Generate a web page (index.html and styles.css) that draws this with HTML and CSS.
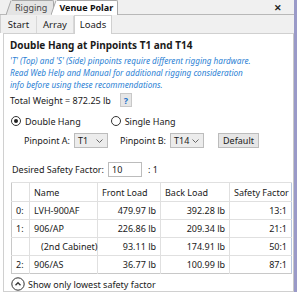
FILE: index.html
```html
<!DOCTYPE html>
<html lang="en">
<head>
    <meta charset="UTF-8">
    <title>Loads</title>
    <link rel="stylesheet" href="styles.css">
</head>
<body>
    <div class="window">
        <div class="doc-tabs">
            <div class="doc-tab">
                <svg class="slant" width="6" height="15" viewBox="0 0 6 15"><polygon points="0,15 5,0.5 6,0.5 6,15" fill="#e4e4e4"/><line x1="0" y1="15" x2="5" y2="0.5" stroke="#a8a8a8"/></svg>
                <span class="doc-label">Rigging</span>
            </div>
            <div class="doc-tab active">
                <svg class="slant" width="6" height="15" viewBox="0 0 6 15"><polygon points="0,15 5,0.5 6,0.5 6,15" fill="#fff"/><line x1="0" y1="15" x2="5" y2="0.5" stroke="#a8a8a8"/></svg>
                <span class="doc-label">Venue Polar</span>
            </div>
            <span class="close">&#x2715;</span>
        </div>
        <div class="sub-tabs">
            <span class="sub-tab">Start</span>
            <span class="sub-tab">Array</span>
            <span class="sub-tab active">Loads</span>
        </div>
        <div class="panel">
            <h1 class="title">Double Hang at Pinpoints T1 and T14</h1>
            <p class="note">'T' (Top) and 'S' (Side) pinpoints require different rigging hardware.
                Read Web Help and Manual for additional rigging consideration
                info before using these recommendations.</p>
            <div class="weight-row">
                <span>Total Weight = 872.25 lb</span>
                <button class="help">?</button>
            </div>
            <div class="radio-row">
                <label class="radio"><span class="dot checked"></span>Double Hang</label>
                <label class="radio"><span class="dot"></span>Single Hang</label>
            </div>
            <div class="pin-row">
                <span>Pinpoint A:</span>
                <span class="select">T1<svg width="7" height="4" viewBox="0 0 7 4"><polyline points="0.5,0.5 3.5,3.5 6.5,0.5" fill="none" stroke="#666"/></svg></span>
                <span class="pin-b">Pinpoint B:</span>
                <span class="select">T14<svg width="7" height="4" viewBox="0 0 7 4"><polyline points="0.5,0.5 3.5,3.5 6.5,0.5" fill="none" stroke="#666"/></svg></span>
                <button class="default">Default</button>
            </div>
            <div class="safety-row">
                <span>Desired Safety Factor:</span>
                <span class="input">10</span>
                <span>: 1</span>
            </div>
            <table class="loads">
                <tr>
                    <th class="idx"></th>
                    <th class="name">Name</th>
                    <th>Front Load</th>
                    <th>Back Load</th>
                    <th>Safety Factor</th>
                </tr>
                <tr>
                    <td class="idx">0:</td>
                    <td class="name">LVH-900AF</td>
                    <td class="num">479.97 lb</td>
                    <td class="num">392.28 lb</td>
                    <td class="num">13:1</td>
                </tr>
                <tr>
                    <td class="idx">1:</td>
                    <td class="name">906/AP</td>
                    <td class="num">226.86 lb</td>
                    <td class="num">209.34 lb</td>
                    <td class="num">21:1</td>
                </tr>
                <tr>
                    <td class="idx"></td>
                    <td class="name sub">(2nd Cabinet)</td>
                    <td class="num">93.11 lb</td>
                    <td class="num">174.91 lb</td>
                    <td class="num">50:1</td>
                </tr>
                <tr>
                    <td class="idx">2:</td>
                    <td class="name">906/AS</td>
                    <td class="num">36.77 lb</td>
                    <td class="num">100.99 lb</td>
                    <td class="num">87:1</td>
                </tr>
            </table>
            <div class="toggle">
                <svg width="14" height="14" viewBox="0 0 14 14"><circle cx="7" cy="7" r="6.2" fill="none" stroke="#333"/><polyline points="4.5,8.2 7,5.7 9.5,8.2" fill="none" stroke="#333" stroke-width="1.3"/></svg>
                <span>Show only lowest safety factor</span>
            </div>
        </div>
    </div>
</body>
</html>
```

FILE: styles.css
```css
body {
    margin: 0;
    font-family: "Noto Sans", "Open Sans", sans-serif;
    font-size: 9px;
    color: #1a1a1a;
    background: #fff;
}

.window {
    width: 294px;
    height: 292px;
    border-right: 3px solid #9a9ac8;
    display: flex;
    flex-direction: column;
}

.doc-tabs {
    height: 17px;
    box-sizing: border-box;
    background: #f0f0f0;
    border-bottom: 1px solid #b8b8b8;
    display: flex;
    align-items: flex-end;
    padding-left: 6px;
}

.doc-tab {
    display: flex;
    height: 15px;
    margin-bottom: -1px;
}

.doc-tab + .doc-tab {
    margin-left: -3px;
}

.slant {
    display: block;
}

.doc-label {
    border-top: 1px solid #a8a8a8;
    border-right: 1px solid #a8a8a8;
    border-radius: 0 2px 0 0;
    background: #e4e4e4;
    padding: 0 6px 0 3px;
    line-height: 14px;
    color: #444;
}

.doc-tab.active .doc-label {
    background: #fff;
    color: #111;
    font-weight: bold;
    padding: 0 4px 0 2px;
}

.close {
    margin-left: auto;
    margin-right: 12px;
    align-self: center;
    font-size: 9px;
    font-weight: bold;
    color: #222;
}

.sub-tabs {
    height: 18px;
    background: #f0f0f0;
    display: flex;
    align-items: flex-end;
    padding-left: 0;
    border-left: 1px solid #d0d0d0;
}

.sub-tab {
    height: 17px;
    line-height: 17px;
    width: 36px;
    text-align: center;
    box-sizing: border-box;
    border-right: 1px solid #d8d8d8;
    color: #222;
    font-size: 9.5px;
}

.sub-tab:nth-child(2) {
    width: 37px;
}

.sub-tab.active {
    height: 19px;
    line-height: 18px;
    width: 38px;
    background: #fff;
    border: 1px solid #d0d0d0;
    border-bottom: none;
    margin-bottom: -1px;
    position: relative;
}

.panel {
    flex: 1;
    margin-left: 3px;
    border: 1px solid #d0d0d0;
    border-right-color: #c8c8c8;
    padding: 0 0 0 5px;
}

.title {
    margin: 5px 0 3px 1px;
    font-size: 10px;
    font-weight: bold;
    line-height: 13px;
}

.note {
    margin: 0 0 0 1px;
    color: #2b7fd4;
    font-size: 8.2px;
    font-style: italic;
    line-height: 12px;
    white-space: pre-line;
}

.weight-row {
    display: flex;
    align-items: center;
    gap: 9px;
    margin: 2px 0 0 1px;
    height: 14px;
}

.help {
    width: 12px;
    height: 14px;
    padding: 0;
    border: 1px solid #c8c8c8;
    background: #e6e6e6;
    color: #2070c8;
    font-family: inherit;
    font-size: 9px;
    font-weight: bold;
}

.radio-row {
    display: flex;
    gap: 30px;
    margin: 7px 0 0 2px;
    height: 14px;
    align-items: center;
}

.radio {
    display: flex;
    align-items: center;
    gap: 4px;
}

.dot {
    width: 8px;
    height: 8px;
    border: 1px solid #333;
    border-radius: 50%;
    box-sizing: content-box;
    display: inline-block;
    position: relative;
}

.dot.checked::after {
    content: "";
    position: absolute;
    left: 2px;
    top: 2px;
    width: 4px;
    height: 4px;
    border-radius: 50%;
    background: #222;
}

.pin-row {
    display: flex;
    align-items: center;
    margin: 5px 0 0 15px;
    height: 15px;
}

.select {
    display: flex;
    align-items: center;
    justify-content: space-between;
    box-sizing: border-box;
    width: 34px;
    height: 15px;
    margin-left: 4px;
    padding: 0 4px 0 3px;
    border: 1px solid #bcbcbc;
    background: #ececec;
}

.pin-b {
    margin-left: 12px;
}

.default {
    margin-left: 14px;
    width: 41px;
    height: 15px;
    padding: 0;
    border: 1px solid #bcbcbc;
    background: #e6e6e6;
    font-family: inherit;
    font-size: 9px;
    color: #1a1a1a;
}

.safety-row {
    display: flex;
    align-items: center;
    margin: 14px 0 0 3px;
    height: 15px;
}

.input {
    width: 34px;
    height: 15px;
    box-sizing: border-box;
    margin: 0 6px 0 4px;
    padding-left: 3px;
    border: 1px solid #bcbcbc;
    line-height: 13px;
}

.loads {
    margin: 5px 0 0 2px;
    width: 281px;
    border-collapse: collapse;
    border: 1px solid #c8c8c8;
    border-right-color: #b8c8e0;
    table-layout: fixed;
}

.loads th,
.loads td {
    height: 17px;
    padding: 0 4px;
    border-top: 1px solid #e0e0e0;
    border-left: 1px solid #e0e0e0;
    font-weight: normal;
    text-align: left;
    white-space: nowrap;
}

.loads th {
    height: 18px;
}

.loads .idx {
    width: 9px;
    border-left: none;
}

.loads th:nth-child(2) { width: 59px; }
.loads th:nth-child(3) { width: 54px; }
.loads th:nth-child(4) { width: 60px; }

.loads .num {
    text-align: right;
}

.loads .sub {
    padding-left: 11px;
}

.toggle {
    display: flex;
    align-items: center;
    gap: 3px;
    margin: 3px 0 0 2px;
}
```
